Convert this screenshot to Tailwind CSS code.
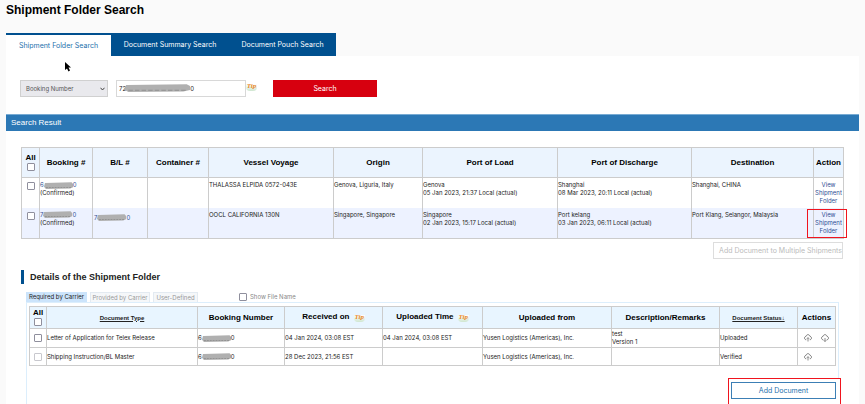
<!DOCTYPE html>
<html lang="en">

<head>
    <meta charset="UTF-8">
    <meta name="viewport" content="width=device-width, initial-scale=1.0">
    <title>Shipment Folder Search</title>
    <script src="https://cdn.jsdelivr.net/npm/@tailwindcss/browser@4"></script>
</head>

<body class="bg-[#fafafa] font-['Inter','Liberation_Sans',sans-serif] text-[6px] leading-[8px] text-[#222]">

    <!-- Shared shapes -->
    <svg class="hidden" aria-hidden="true">
        <symbol id="mask" viewBox="0 0 30 8" preserveAspectRatio="none">
            <path d="M1 1 L28.500 0.200 L30 2 L30 6 L27 7.500 L2 8 L0 5.500 Z" fill="#b0b0b0" />
            <path d="M2 6.300 H28" stroke="#909090" stroke-width="1" stroke-dasharray="2 1" />
        </symbol>
        <symbol id="cloud-up" viewBox="0 0 16 16">
            <path d="M4.500 11.500C2.500 11.500 1 10 1 8.200S2.300 5 4 4.800C4.600 2.600 6.200 1.300 8 1.300s3.400 1.300 4 3.500c1.700.2 3 1.600 3 3.400s-1.500 3.300-3.500 3.300" fill="none" stroke="#555" stroke-width="1.500" />
            <path d="M8 15V7.500M5.800 9.500L8 7.300L10.200 9.500" fill="none" stroke="#555" stroke-width="1.300" />
        </symbol>
        <symbol id="cloud-down" viewBox="0 0 16 16">
            <path d="M4.500 11.500C2.500 11.500 1 10 1 8.200S2.300 5 4 4.800C4.600 2.600 6.200 1.300 8 1.300s3.400 1.300 4 3.500c1.700.2 3 1.600 3 3.400s-1.500 3.300-3.500 3.300" fill="none" stroke="#555" stroke-width="1.500" />
            <path d="M8 8V15M5.500 12.500L8 15L10.500 12.500" fill="none" stroke="#555" stroke-width="1.300" />
        </symbol>
    </svg>

    <div class="px-[6px] min-h-screen flex flex-col">
        <h1 class="h-[33px] pt-[2px] font-['Liberation_Sans',sans-serif] text-[12px] leading-[16px] font-bold text-black">Shipment Folder Search</h1>

        <!-- Search tabs -->
        <nav class="flex h-[23px] text-[7px] leading-[23px] text-white">
            <a href="#" class="w-[105px] border-t-2 border-[#00508f] bg-white text-center leading-[21px] text-[#2470ac]">Shipment Folder Search</a>
            <a href="#" class="w-[118px] bg-[#00508f] text-center">Document Summary Search</a>
            <a href="#" class="w-[107px] bg-[#00508f] text-center">Document Pouch Search</a>
        </nav>

        <main class="relative flex-grow bg-white">
            <!-- Mouse pointer -->
            <svg class="absolute left-[59px] top-[6px] w-[6px] h-[10px]" viewBox="0 0 12 20" aria-hidden="true">
                <path d="M0 0V16L4 13L7 19L10 17L7 11H12Z" fill="#000" />
            </svg>

            <!-- Search form -->
            <form class="flex h-[58px] pt-6 pl-[14px]">
                <div class="relative w-[88px] h-[17px]">
                    <select aria-label="Search by" class="appearance-none w-full h-full border border-[#d0d0d0] bg-[#e9e9ed] pl-[5px] text-[#555]">
                        <option>Booking Number</option>
                    </select>
                    <svg class="absolute right-[3px] top-[7px] w-[5px] h-[4px]" viewBox="0 0 10 8" aria-hidden="true">
                        <path d="M1 1.500L5 6L9 1.500" fill="none" stroke="#444" stroke-width="2" />
                    </svg>
                </div>
                <div class="relative ml-2 w-[130px] h-[17px]">
                    <input type="text" aria-label="Booking number" value="72                                      0" class="w-full h-full border border-[#d8d8d8] bg-white px-[2px]">
                    <svg class="absolute left-[8px] top-[4px] w-[66px] h-[8px]" aria-hidden="true"><use href="#mask" /></svg>
                </div>
                <span class="mt-[4px] w-[11px] h-[7px] rounded-b bg-linear-to-b from-white to-[#cfe6d0] text-center font-['Liberation_Serif',serif] text-[7px] leading-[5px] font-bold italic text-[#e8892b]">Tip</span>
                <button type="button" class="ml-4 w-[104px] h-[17px] bg-[#d7000f] text-[7px] text-white">Search</button>
            </form>

            <h2 class="h-[17px] border-t border-[#78abd3] bg-[#2c78b5] pl-[5px] font-['Liberation_Sans',sans-serif] text-[8px] leading-[16px] text-white">Search Result</h2>

            <section class="pt-4 pl-[15px] pr-[16px]">
                <table class="w-full table-fixed border-collapse border border-[#ccc]">
                    <colgroup>
                        <col class="w-[18px]">
                        <col class="w-[53px]">
                        <col class="w-[55px]">
                        <col class="w-[61px]">
                        <col class="w-[125px]">
                        <col class="w-[89px]">
                        <col class="w-[135px]">
                        <col class="w-[134px]">
                        <col class="w-[122px]">
                        <col class="w-[30px]">
                    </colgroup>
                    <thead>
                        <tr class="h-[30px] border-b border-[#ccc] bg-[#ebf4fe] font-['Liberation_Sans',sans-serif] text-[8px] text-black *:border-x *:border-[#ccc] *:p-0">
                            <th>
                                <label for="all-bookings" class="block">All</label>
                                <input id="all-bookings" type="checkbox" class="block mx-auto mt-[1px] appearance-none size-[8px] border border-[#8f8f9d] rounded-[1px] bg-white">
                            </th>
                            <th>Booking #</th>
                            <th>B/L #</th>
                            <th>Container #</th>
                            <th>Vessel Voyage</th>
                            <th>Origin</th>
                            <th>Port of Load</th>
                            <th>Port of Discharge</th>
                            <th>Destination</th>
                            <th>Action</th>
                        </tr>
                    </thead>
                    <tbody>
                        <tr class="h-[30px] align-top *:border-x *:border-[#ccc] *:px-0 *:pt-[3px] *:pb-0">
                            <td><input type="checkbox" aria-label="Select booking 1" class="block mx-auto mt-[1px] appearance-none size-[8px] border border-[#8f8f9d] rounded-[1px] bg-white"></td>
                            <td><a href="#" class="flex items-center text-[#2f4f94]">6<svg class="w-[29px] h-[7px]" aria-hidden="true"><use href="#mask" /></svg>0</a>(Confirmed)</td>
                            <td></td>
                            <td></td>
                            <td>THALASSA ELPIDA 0572-043E</td>
                            <td>Genova, Liguria, Italy</td>
                            <td>Genova<br>05 Jan 2023, 21:37 Local (actual)</td>
                            <td>Shanghai<br>08 Mar 2023, 20:11 Local (actual)</td>
                            <td>Shanghai, CHINA</td>
                            <td class="text-center"><a href="#" class="text-[#2f4f94]">View Shipment Folder</a></td>
                        </tr>
                        <tr class="h-[31px] align-top bg-[#edf2ff] *:border-x *:border-[#ccc] *:px-0 *:pt-[3px] *:pb-0">
                            <td><input type="checkbox" aria-label="Select booking 2" class="block mx-auto mt-[1px] appearance-none size-[8px] border border-[#8f8f9d] rounded-[1px] bg-white"></td>
                            <td><a href="#" class="flex items-center text-[#2f4f94]">7<svg class="w-[29px] h-[7px]" aria-hidden="true"><use href="#mask" /></svg>0</a>(Confirmed)</td>
                            <td><a href="#" class="flex items-center pl-[1px] pt-[3px] text-[#2f4f94]">7<svg class="w-[29px] h-[7px]" aria-hidden="true"><use href="#mask" /></svg>0</a></td>
                            <td></td>
                            <td>OOCL CALIFORNIA 130N</td>
                            <td>Singapore, Singapore</td>
                            <td>Singapore<br>02 Jan 2023, 15:17 Local (actual)</td>
                            <td>Port kelang<br>03 Jan 2023, 06:11 Local (actual)</td>
                            <td>Port Klang, Selangor, Malaysia</td>
                            <td class="relative text-center">
                                <a href="#" class="text-[#2f4f94]">View Shipment Folder</a>
                                <!-- Highlight -->
                                <span class="absolute -left-[7px] -right-[4px] top-[1px] bottom-0 border border-[#f0141e]"></span>
                            </td>
                        </tr>
                    </tbody>
                </table>
                <div class="flex justify-end pt-[3px]">
                    <button type="button" disabled class="w-[130px] h-[17px] border border-[#ddd] bg-white text-right text-[7px] whitespace-nowrap text-[#bbb]">Add Document to Multiple Shipments</button>
                </div>
            </section>

            <!-- Folder details -->
            <section class="pt-[11px] pl-[15px] pr-[20px]">
                <h2 class="h-[14px] border-l-3 border-[#00508f] pl-[6px] font-['Liberation_Sans',sans-serif] text-[9px] leading-[15px] font-bold">Details of the Shipment Folder</h2>
                <div class="flex pt-2 pl-[5px] leading-[10px] text-[#999]">
                    <button type="button" class="w-[61px] h-[10px] bg-[#cce4fb] text-[#222]">Required by Carrier</button>
                    <button type="button" class="ml-[3px] w-[60px] h-[10px] border border-b-0 border-[#e3eaf1] bg-[#f5f7f9] leading-[8px]">Provided by Carrier</button>
                    <button type="button" class="ml-[3px] w-[45px] h-[10px] border border-b-0 border-[#e3eaf1] bg-[#f5f7f9] leading-[8px]">User-Defined</button>
                    <label class="ml-[41px] flex items-center gap-[3px] text-[#888]">
                        <input type="checkbox" class="appearance-none size-[8px] border border-[#8f8f9d] rounded-[1px] bg-white">
                        Show File Name
                    </label>
                </div>
                <div class="ml-[5px] h-[102px] border border-b-0 border-[#dceefc] pt-[3px] pl-[2px] pr-[3px]">
                    <table class="w-full table-fixed border-collapse border border-[#ccc]">
                        <colgroup>
                            <col class="w-[17px]">
                            <col class="w-[151px]">
                            <col class="w-[87px]">
                            <col class="w-[98px]">
                            <col class="w-[100px]">
                            <col class="w-[129px]">
                            <col class="w-[108px]">
                            <col class="w-[78px]">
                            <col class="w-[38px]">
                        </colgroup>
                        <thead>
                            <tr class="h-[22px] bg-[#e8f5ff] font-['Liberation_Sans',sans-serif] text-[8px] text-black *:border *:border-[#ccc] *:p-0">
                                <th>
                                    <label for="all-documents" class="block">All</label>
                                    <input id="all-documents" type="checkbox" class="block mx-auto mt-[1px] appearance-none size-[8px] border border-[#8f8f9d] rounded-[1px] bg-white">
                                </th>
                                <th><a href="#" class="text-[6px] text-[#222] underline">Document Type</a></th>
                                <th>Booking Number</th>
                                <th>Received on <span class="inline-block ml-[2px] w-[11px] h-[7px] rounded-b bg-linear-to-b from-white to-[#cfe6d0] font-['Liberation_Serif',serif] text-[7px] leading-[5px] italic text-[#e8892b]">Tip</span></th>
                                <th>Uploaded Time <span class="inline-block ml-[2px] w-[11px] h-[7px] rounded-b bg-linear-to-b from-white to-[#cfe6d0] font-['Liberation_Serif',serif] text-[7px] leading-[5px] italic text-[#e8892b]">Tip</span></th>
                                <th>Uploaded from</th>
                                <th>Description/Remarks</th>
                                <th><a href="#" class="text-[6px] text-[#222] underline">Document Status↓</a></th>
                                <th>Actions</th>
                            </tr>
                        </thead>
                        <tbody>
                            <tr class="h-[19px] *:border *:border-[#ccc] *:p-0">
                                <td><input type="checkbox" aria-label="Select document 1" class="block mx-auto appearance-none size-[8px] border border-[#8f8f9d] rounded-[1px] bg-white"></td>
                                <td>Letter of Application for Telex Release</td>
                                <td><span class="flex items-center">6<svg class="w-[29px] h-[7px]" aria-hidden="true"><use href="#mask" /></svg>0</span></td>
                                <td>04 Jan 2024, 03:08 EST</td>
                                <td>04 Jan 2024, 03:08 EST</td>
                                <td>Yusen Logistics (Americas), Inc.</td>
                                <td>test<br>Version 1</td>
                                <td>Uploaded</td>
                                <td>
                                    <div class="flex gap-[9px] pl-[6px]">
                                        <button type="button" aria-label="Upload"><svg class="size-[8px]"><use href="#cloud-up" /></svg></button>
                                        <button type="button" aria-label="Download"><svg class="size-[8px]"><use href="#cloud-down" /></svg></button>
                                    </div>
                                </td>
                            </tr>
                            <tr class="h-[18px] *:border *:border-[#ccc] *:p-0">
                                <td><input type="checkbox" disabled aria-label="Select document 2" class="block mx-auto appearance-none size-[8px] border border-[#c8c8ce] rounded-[1px] bg-white"></td>
                                <td>Shipping Instruction/BL Master</td>
                                <td><span class="flex items-center">6<svg class="w-[29px] h-[7px]" aria-hidden="true"><use href="#mask" /></svg>0</span></td>
                                <td>28 Dec 2023, 21:56 EST</td>
                                <td></td>
                                <td>Yusen Logistics (Americas), Inc.</td>
                                <td></td>
                                <td>Verified</td>
                                <td>
                                    <div class="flex pl-[6px]">
                                        <button type="button" aria-label="Upload"><svg class="size-[8px]"><use href="#cloud-up" /></svg></button>
                                    </div>
                                </td>
                            </tr>
                        </tbody>
                    </table>
                    <div class="-mr-[6px] flex justify-end pt-[12px]">
                        <div class="border border-[#f0141e] bg-white pt-[3px] pb-[5px] pl-[2px] pr-[4px]">
                            <button type="button" class="block w-[105px] h-[17px] border border-[#3c7fb5] bg-white text-[7px] text-[#2470ac]">Add Document</button>
                        </div>
                    </div>
                </div>
            </section>
        </main>
    </div>
</body>

</html>
